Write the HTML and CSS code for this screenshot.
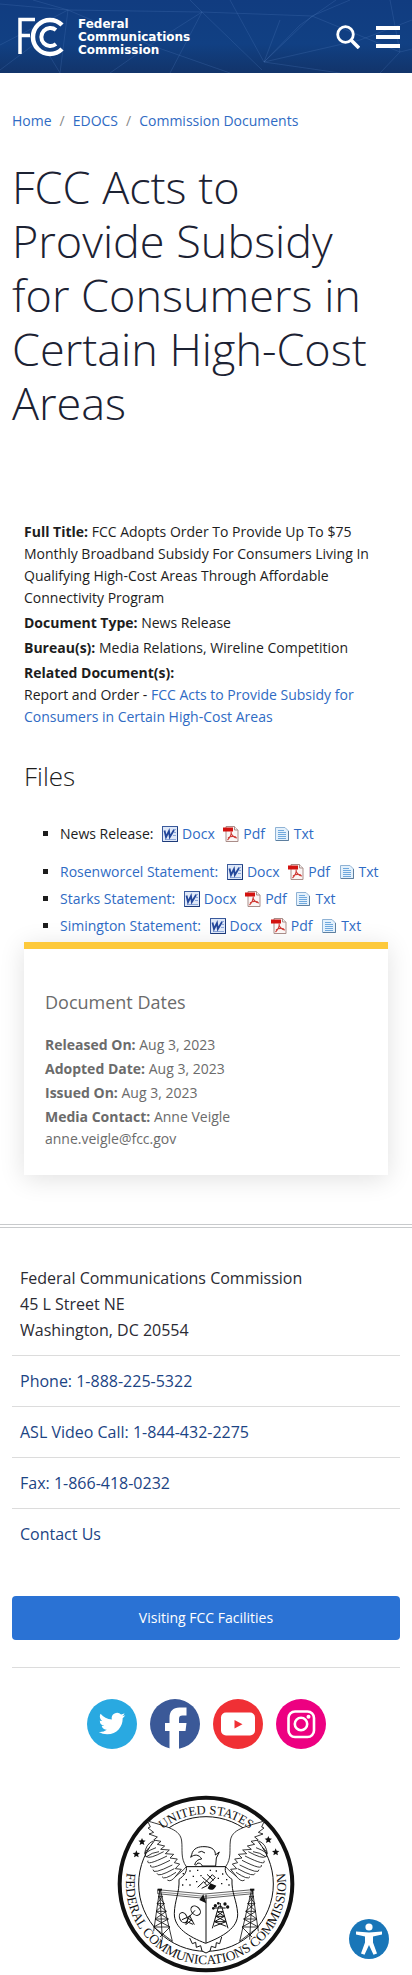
FILE: index.html
```html
<!DOCTYPE html>
<html lang="en">
<head>
<meta charset="utf-8">
<meta name="viewport" content="width=device-width, initial-scale=1">
<title>FCC Acts to Provide Subsidy for Consumers in Certain High-Cost Areas</title>
<link rel="stylesheet" href="styles.css">
</head>
<body>
<svg class="sprite" aria-hidden="true">
  <symbol id="docx" viewBox="0 0 16 16">
    <rect x=".5" y=".5" width="15" height="15" fill="#dfe8f8" stroke="#3a5a9c"/>
    <path d="M15.500 1v14.500H1" fill="none" stroke="#1d3a78"/>
    <path d="M11 3.500h3M12 6.500h2M11 9.500h3M3 13.500h11" stroke="#8aa5d8" fill="none"/>
    <path d="M2.500 4.500L4 11l3-6 .8 6L12 4" fill="none" stroke="#24479a" stroke-width="1.800"/>
  </symbol>
  <symbol id="pdf" viewBox="0 0 16 16">
    <path d="M3 .5h8.500L15 4v11.500H3z" fill="#fbf6f5" stroke="#a98d89"/>
    <path d="M11.500.5V4H15" fill="#eee" stroke="#a98d89"/>
    <path d="M0 1.500h10v4H0z" fill="#d3120f"/>
    <path d="M4.500 14c2-2 4-5 3.700-8.500M8 7c1 3 3 4.500 6 5M5 12c2-1.500 5-2 8-1" fill="none" stroke="#cf3b35" stroke-width="1.100"/>
  </symbol>
  <symbol id="txt" viewBox="0 0 16 16">
    <path d="M1.500 1.500H11L14.500 5v9.500h-13z" fill="#e4f1fc" stroke="#8fb2d4"/>
    <path d="M14.500 5v9.500H2" fill="none" stroke="#5d7f9f"/>
    <path d="M4 4.500h6M4 6.500h8M4 8.500h8M4 10.500h8M4 12.500h8" stroke="#6fa8dd" fill="none"/>
  </symbol>
</svg>

<header class="masthead">
  <svg class="masthead-pattern" viewBox="0 0 412 73" preserveAspectRatio="xMidYMid slice" aria-hidden="true">
    <g fill="none" stroke="#4a78b8" stroke-opacity=".28">
      <path d="M0 4L68 10 33 0M68 10L60 73M68 10L150 45 230 73M0 45L68 10 202 12M150 45L110 73M150 45L202 12 262 70M202 12L190 0M202 12L312 16 264 62M202 12L170 73M312 16L350 0M312 16L400 52 412 49M264 62L230 0M264 62L300 25 336 0M264 62L360 40 412 20M264 62L340 73M264 62L280 20M400 52L380 73M400 52L390 0M0 70L40 40 60 73"/>
    </g>
  </svg>
  <a class="brand" href="#" aria-label="Federal Communications Commission home">
    <svg class="brand-mark" viewBox="0 0 46 40" aria-hidden="true">
      <g fill="none" stroke="#fff">
        <path d="M2 37V2.500H17M2 18.500H12" stroke-width="3.500"/>
        <path d="M44 8A17 17 0 1 0 44 32" stroke-width="4.500"/>
        <path d="M38 13A9 9 0 1 0 38 27" stroke-width="4"/>
      </g>
    </svg>
    <span class="brand-name">Federal<br>Communications<br>Commission</span>
  </a>
  <div class="masthead-tools">
    <button type="button" class="tool" aria-label="Search">
      <svg viewBox="0 0 24 24"><circle cx="9.500" cy="9.500" r="7.800" fill="none" stroke="#fff" stroke-width="2.800"/><path d="M15 15l8 8" stroke="#fff" stroke-width="3.600"/></svg>
    </button>
    <button type="button" class="tool" aria-label="Menu">
      <svg viewBox="0 0 24 24"><path d="M0 3h24M0 12h24M0 21h24" stroke="#fff" stroke-width="4"/></svg>
    </button>
  </div>
</header>

<main>
  <nav class="breadcrumb" aria-label="Breadcrumb">
    <ol>
      <li><a href="#">Home</a></li>
      <li><a href="#">EDOCS</a></li>
      <li><a href="#">Commission Documents</a></li>
    </ol>
  </nav>
  <h1>FCC Acts to Provide Subsidy for Consumers in Certain High-Cost Areas</h1>

  <article class="document">
    <div class="facts">
      <p><strong>Full Title:</strong> FCC Adopts Order To Provide Up To $75 Monthly Broadband Subsidy For Consumers Living In Qualifying High-Cost Areas Through Affordable Connectivity Program</p>
      <p><strong>Document Type:</strong> News Release</p>
      <p><strong>Bureau(s):</strong> Media Relations, Wireline Competition</p>
      <p><strong>Related Document(s):</strong><br>Report and Order - <a href="#">FCC Acts to Provide Subsidy for Consumers in Certain High-Cost Areas</a></p>
    </div>
    <h2>Files</h2>
    <ul class="files">
      <li class="primary">News Release: <a class="file" href="#"><svg><use href="#docx"/></svg>Docx</a> <a class="file" href="#"><svg><use href="#pdf"/></svg>Pdf</a> <a class="file" href="#"><svg><use href="#txt"/></svg>Txt</a></li>
      <li><a href="#">Rosenworcel Statement:</a> <a class="file" href="#"><svg><use href="#docx"/></svg>Docx</a> <a class="file" href="#"><svg><use href="#pdf"/></svg>Pdf</a> <a class="file" href="#"><svg><use href="#txt"/></svg>Txt</a></li>
      <li><a href="#">Starks Statement:</a> <a class="file" href="#"><svg><use href="#docx"/></svg>Docx</a> <a class="file" href="#"><svg><use href="#pdf"/></svg>Pdf</a> <a class="file" href="#"><svg><use href="#txt"/></svg>Txt</a></li>
      <li><a href="#">Simington Statement:</a> <a class="file" href="#"><svg><use href="#docx"/></svg>Docx</a> <a class="file" href="#"><svg><use href="#pdf"/></svg>Pdf</a> <a class="file" href="#"><svg><use href="#txt"/></svg>Txt</a></li>
    </ul>
    <aside class="dates">
      <h3>Document Dates</h3>
      <div class="facts">
        <p><strong>Released On:</strong> Aug 3, 2023</p>
        <p><strong>Adopted Date:</strong> Aug 3, 2023</p>
        <p><strong>Issued On:</strong> Aug 3, 2023</p>
        <p><strong>Media Contact:</strong> Anne Veigle<br>anne.veigle@fcc.gov</p>
      </div>
    </aside>
  </article>
</main>

<footer class="footer">
  <ul class="contact">
    <li>Federal Communications Commission<br>45 L Street NE<br>Washington, DC 20554</li>
    <li><a href="#">Phone: 1-888-225-5322</a></li>
    <li><a href="#">ASL Video Call: 1-844-432-2275</a></li>
    <li><a href="#">Fax: 1-866-418-0232</a></li>
    <li><a href="#">Contact Us</a></li>
  </ul>
  <a class="visit" href="#">Visiting FCC Facilities</a>
  <div class="social">
    <a href="#" aria-label="Twitter"><svg viewBox="0 0 51 51"><circle cx="25.500" cy="25.500" r="25.500" fill="#29a9e1"/><path transform="translate(12 11.500) scale(1.130)" fill="#fff" d="M23.950 4.570a10 10 0 0 1-2.820.77 4.960 4.960 0 0 0 2.160-2.720c-.95.550-2 .950-3.130 1.180a4.920 4.920 0 0 0-8.380 4.480C7.690 8.090 4.070 6.130 1.640 3.160a4.820 4.820 0 0 0-.67 2.480c0 1.710.87 3.210 2.190 4.100a4.900 4.900 0 0 1-2.230-.62v.06a4.920 4.920 0 0 0 3.950 4.830 5 5 0 0 1-2.210.08 4.940 4.940 0 0 0 4.600 3.420A9.870 9.870 0 0 1 0 19.540a13.990 13.990 0 0 0 7.560 2.210c9.050 0 14-7.500 14-13.980 0-.210 0-.420-.02-.630a9.940 9.940 0 0 0 2.410-2.570z"/></svg></a>
    <a href="#" aria-label="Facebook"><svg viewBox="0 0 50 50"><circle cx="25" cy="25" r="25" fill="#3b5998"/><path fill="#fff" d="M19.500 50V32H15v-8h4.500v-5c0-7 3.500-10.500 10-10.500h7v8h-4c-2.500 0-3.500 1-3.500 3.500v4h7.500l-1 8H29v18z"/></svg></a>
    <a href="#" aria-label="YouTube"><svg viewBox="0 0 50 50"><circle cx="25" cy="25" r="25" fill="#f03035"/><rect x="8" y="13.500" width="34" height="23" rx="5" fill="#fff"/><path d="M21.500 21v8.500l8-4.250z" fill="#f03035"/></svg></a>
    <a href="#" aria-label="Instagram"><svg viewBox="0 0 50 50"><circle cx="25" cy="25" r="25" fill="#ed0081"/><g fill="none" stroke="#fff" stroke-width="2.600"><rect x="12.500" y="12.500" width="25.500" height="25.500" rx="6.500"/><circle cx="25" cy="25" r="6.200"/></g><circle cx="32.500" cy="17.700" r="2" fill="#fff"/></svg></a>
  </div>
  <svg class="seal" viewBox="50 46 534 534" role="img" aria-label="Seal of the Federal Communications Commission">
    <defs>
      <path id="arc-top" d="M107 313A210 210 0 0 1 527 313"/>
      <path id="arc-bottom" d="M96 220A240 240 0 1 0 538 220"/>
      <polygon id="star" points="0,-11 3,-4 11,-3 5,2 7,10 0,6 -7,10 -5,2 -11,-3 -3,-4"/>
      <g id="half" fill="none" stroke="#111" stroke-width="2.500" stroke-linejoin="round">
        <path fill="#fff" d="M317 261H258C240 236 247 210 244 184 240 149 202 142 142 124L150 142 143 145 160 158 146 163 171 172 160 181 182 185 171 194 193 199 181 209 207 211 195 222 220 224 209 235 231 238 222 249 238 253 225 267 243 269 226 290 250 270 258 261"/>
        <path d="M158 184q-22 10-25 38q16-12 34-18M147 204q-18 12-10 28q18-14 39-16M139 231q8 8 51-15M143 243q-8 18 57-14M151 256q-5 18 58-14M158 270q-2 16 58-14M170 281q1 14 52-14M185 291q5 12 42-13M201 301q10 8 26-12"/>
        <path d="M178 330L160 455M180 330L216 485M173 350h14M170 372h22M167 395h31M164 418h40M160 442h49M174 350l18 22-25 23 37 23-44 24 56 43M187 350l-17 22 28 23-34 23 45 24-30 30M178 330l8 150"/>
        <path d="M172 330h13" stroke-width="6"/>
      </g>
    </defs>
    <circle cx="317" cy="313" r="259" fill="#fff" stroke="#111" stroke-width="12"/>
    <circle cx="317" cy="313" r="202" fill="none" stroke="#111" stroke-width="3"/>
    <use href="#half"/>
    <use href="#half" transform="translate(634 0) scale(-1 1)"/>
    <text class="seal-text"><textPath href="#arc-top" startOffset="50%" text-anchor="middle">UNITED STATES</textPath></text>
    <text class="seal-text seal-text-bottom"><textPath href="#arc-bottom" startOffset="50%" text-anchor="middle">FEDERAL COMMUNICATIONS COMMISSION</textPath></text>
    <g fill="#111">
      <use href="#star" x="125" y="186"/><use href="#star" x="108" y="223"/>
      <use href="#star" x="504" y="180"/><use href="#star" x="526" y="217"/>
    </g>
    <g fill="#fff" stroke="#111" stroke-width="3" stroke-linejoin="round">
      <path d="M268 475l8 17 10-4 2 15 13-5 4 16 12 6 12-6 4-14 13 4 2-15 10 3 6-20"/>
      <path d="M258 261h118c-5 16 5 28 19 38-2 40 14 62 17 102 2 44-45 70-96 90-51-20-95-46-94-90 1-40 16-62 14-102 14-10 25-22 22-38z"/>
      <path d="M274 225c4-20 22-25 40-24 24 1 32 12 31 25l12-9-9 18-2 24h-40c-2-6-7-9-14-9-2 6-6 7-9 5 3-11 10-16 21-17-8-14-22-15-33-5z"/>
      <path d="M294 218q10-7 20 2" fill="none"/>
      <path d="M172 330l140 13 146-13v12l-146 14-140-14z" fill="none" stroke-width="2"/>
      <path d="M178 337l134 13 140-13" fill="none" stroke-width="1.500"/>
      <path d="M317 345v145" fill="none"/>
    </g>
    <g fill="#111">
      <path d="M297 361l12-17 9 27zM322 326q15 12 26-8l-18-7z"/>
      <circle cx="345" cy="378" r="5"/><circle cx="374" cy="373" r="5"/><circle cx="339" cy="386" r="4"/><circle cx="382" cy="382" r="5"/><circle cx="354" cy="371" r="4"/>
      <path d="M247 280h4v4h-4zM267 272h4v4h-4zM290 270h4v4h-4zM256 298h4v4h-4zM277 288h4v4h-4zM245 314h4v4h-4zM267 314h4v4h-4zM287 304h4v4h-4zM300 286h4v4h-4zM346 272h4v4h-4zM365 281h4v4h-4zM352 294h4v4h-4zM377 298h4v4h-4zM362 310h4v4h-4zM384 314h4v4h-4zM328 270h4v4h-4z"/>
    </g>
    <g fill="none" stroke="#111" stroke-width="3">
      <path d="M292 323l18-17 10 12-16 8M313 310l23-25 9 9-25 24M306 293l25 21M320 284l20 18"/>
      <ellipse cx="249" cy="414" rx="11" ry="16" transform="rotate(-25 249 414)"/>
      <ellipse cx="286" cy="393" rx="12" ry="16" transform="rotate(-45 286 393)"/>
      <path d="M245 420l23-10 16-18M256 435l12-27 14 27M260 426l18 8M264 416l12 8M258 434l14-12"/>
      <path d="M336 446l19-66h9l19 66M351 396h17M347 410h25M342 426h35M351 396l21 14-30 16 36 14M368 396l-21 14 30 16-36 14M342 385h34M360 370v14"/>
    </g>
  </svg>
</footer>

<button type="button" class="a11y" aria-label="Accessibility options">
  <svg viewBox="0 0 40 40"><circle cx="20" cy="20" r="20" fill="#1976b8"/><circle cx="20" cy="8" r="3.600" fill="#fff"/><path fill="#fff" d="M7 12.500l13 1 13-1v3l-9 2v6l4 11-3.500 1.200L20 26l-4.500 9.700L12 34.500l4-11v-6l-9-2z"/></svg>
</button>
</body>
</html>
```
FILE: styles.css
```css
* {
  box-sizing: border-box;
}

body {
  margin: 0;
  background: #fff;
  color: #1d1d1d;
  font-family: "Open Sans", "Noto Sans", sans-serif;
  font-size: 14px;
  line-height: 22px;
}

h1, h2, h3, p, ul, ol {
  margin: 0;
  padding: 0;
  font-weight: 400;
}

a {
  color: #2f6bc4;
  text-decoration: none;
}

svg {
  display: block;
}

button {
  padding: 0;
  border: 0;
  background: none;
  cursor: pointer;
}

.sprite {
  position: absolute;
  width: 0;
  height: 0;
}

/* Masthead */
.masthead {
  position: relative;
  display: flex;
  align-items: center;
  justify-content: space-between;
  padding: 17px 12px 16px 18px;
  background: linear-gradient(#113c80, #114083 60%, #12346a);
}

.masthead-pattern {
  position: absolute;
  inset: 0;
  width: 100%;
  height: 100%;
}

.brand {
  position: relative;
  display: flex;
  align-items: center;
  gap: 14px;
  color: #fff;
}

.brand-mark {
  width: 46px;
  height: 40px;
}

.brand-name {
  font: bold 12px/13px "DejaVu Sans", sans-serif;
}

.masthead-tools {
  position: relative;
  display: flex;
  gap: 16px;
}

.tool svg {
  width: 24px;
  height: 24px;
}

/* Breadcrumb and title */
.breadcrumb {
  padding: 37px 12px 0;
}

.breadcrumb ol {
  display: flex;
  flex-wrap: wrap;
  list-style: none;
}

.breadcrumb li + li::before {
  content: "/";
  padding: 0 8px;
  color: #888;
}

h1 {
  padding: 28px 12px 0;
  color: #1c2233;
  font-size: 45px;
  font-weight: 300;
  line-height: 54px;
}

/* Document */
.document {
  padding: 91px 24px 0;
}

.facts {
  display: grid;
  gap: 3px;
}

h2 {
  padding: 31px 0 30px;
  font-size: 26px;
  font-weight: 300;
  line-height: 34px;
}

.files {
  padding-left: 36px;
  list-style: square;
}

.files li {
  padding-bottom: 5px;
}

.files .primary {
  padding-bottom: 16px;
}

.file {
  margin-left: 5px;
}

.file svg {
  display: inline-block;
  width: 16px;
  height: 16px;
  margin-right: 4px;
  vertical-align: -3px;
}

.dates {
  padding: 41px 21px 25px;
  border-top: 7px solid #fdc93b;
  background: #fff;
  box-shadow: 0 4px 24px rgba(0, 0, 0, 0.12);
  color: #6b6b6b;
}

.dates .facts {
  gap: 2px;
}

h3 {
  padding-bottom: 20px;
  font-size: 18px;
  line-height: 24px;
}

/* Footer */
.footer {
  margin-top: 49px;
  padding: 37px 12px 0;
  border-top: 4px double #c8cacc;
}

.contact {
  list-style: none;
  color: #2b2b33;
  font-size: 16px;
  line-height: 26px;
}

.contact li {
  padding: 12px 8px;
  border-top: 1px solid #dcdcdc;
}

.contact li:first-child {
  padding-top: 0;
  border-top: 0;
}

.contact a {
  color: #1c4484;
}

.visit {
  display: block;
  margin-top: 37px;
  padding: 11px;
  border-radius: 4px;
  background: #2a72d4;
  color: #fff;
  text-align: center;
}

.social {
  display: flex;
  justify-content: center;
  gap: 13px;
  margin-top: 27px;
  padding: 31px 0 46px;
  border-top: 1px solid #dcdcdc;
}

.social svg {
  width: 50px;
  height: 50px;
}

.seal {
  width: 178px;
  height: 178px;
  margin: 0 auto;
}

.seal-text {
  fill: #111;
  font: 38px "Liberation Serif", serif;
}

.seal-text-bottom {
  font-size: 40px;
}

.a11y {
  position: fixed;
  right: 23px;
  bottom: 16px;
}

.a11y svg {
  width: 40px;
  height: 40px;
}
```
